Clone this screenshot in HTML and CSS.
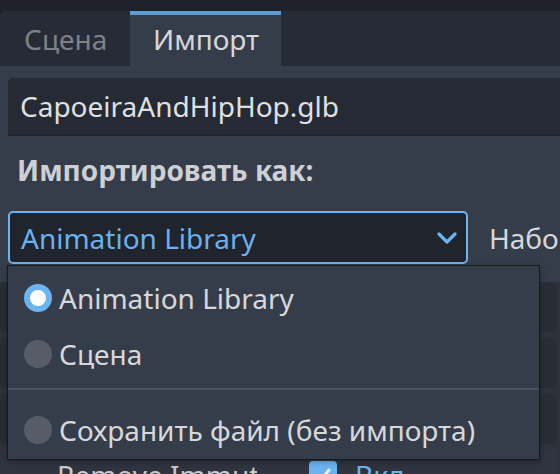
FILE: index.html
```html
<!DOCTYPE html>
<html lang="ru">
<head>
  <meta charset="UTF-8">
  <title>Импорт</title>
  <link rel="stylesheet" href="styles.css">
</head>
<body>

  <!-- вкладки дока -->
  <div class="tabs">
    <div class="tab">Сцена</div>
    <div class="tab active">Импорт</div>
  </div>

  <div class="panel">
    <div class="file-field">CapoeiraAndHipHop.glb</div>
    <div class="section-label">Импортировать как:</div>

    <div class="import-row">
      <div class="select">
        <span>Animation Library</span>
        <svg class="chevron" width="20" height="12" viewBox="0 0 20 12">
          <polyline points="2,2 10,10 18,2" />
        </svg>
      </div>
      <span class="preset">Набор</span>
    </div>

    <!-- инспектор под выпадающим списком -->
    <div class="inspector">
      <div class="prop-row"></div>
      <div class="prop-row"></div>
      <div class="prop-row"></div>
      <div class="prop-row">
        <span class="prop-name">Remove Immutable Tracks</span>
        <span class="check">
          <svg width="28" height="28" viewBox="0 0 28 28">
            <polyline points="8,15 12,19 20,9" />
          </svg>
        </span>
        <span class="check-label">Вкл</span>
      </div>
    </div>

    <!-- открытое меню OptionButton -->
    <div class="popup">
      <div class="popup-item">
        <span class="radio checked"></span>
        <span>Animation Library</span>
      </div>
      <div class="popup-item">
        <span class="radio"></span>
        <span>Сцена</span>
      </div>
      <div class="popup-sep"></div>
      <div class="popup-item">
        <span class="radio"></span>
        <span>Сохранить файл (без импорта)</span>
      </div>
    </div>
  </div>

</body>
</html>
```

FILE: styles.css
```css
/* цвета редактора */
:root {
  --base: #363d4a;
  --dark: #1f222a;
  --tabbar: #262b35;
  --field: #252a34;
  --accent: #6cb3f1;
  --text: #d6d8db;
}
*, *::before, *::after { box-sizing: border-box; margin: 0; padding: 0; }

body {
  width: 560px; height: 474px;
  overflow: hidden;
  background: var(--dark);
  font-family: "Noto Sans", "DejaVu Sans", sans-serif;
  font-size: 28px;
  color: var(--text);
}

/* Tabs */
.tabs {
  margin-top: 11px;
  height: 55px;
  display: flex;
  background: var(--tabbar);
  border-radius: 5px 0 0 0;
  overflow: hidden;
}
.tab {
  width: 130px;
  padding-left: 24px;
  display: flex; align-items: center;
  color: #7e8288;
  white-space: nowrap;
}
.tab.active {
  width: 151px;
  padding-left: 23px;
  background: var(--base);
  color: #d5d7da;
  box-shadow: inset 0 4px 0 #5e9cd4;
}

/* Panel */
.panel {
  position: relative;
  background: var(--base);
  padding-top: 12px;
  height: 408px;
  overflow: hidden;
}
.file-field {
  margin-left: 8px;
  height: 58px;
  padding-left: 12px;
  display: flex; align-items: center;
  background: var(--field);
  border-bottom: 2px solid #1f232b;
  border-radius: 5px 0 0 0;
  color: #dfe0e2;
  white-space: nowrap;
}
.section-label {
  margin: 15px 0 22px 17px;
  line-height: 38px;
  font-weight: 700;
  color: #cdd0d4;
}

.import-row {
  display: flex; align-items: center;
  padding-left: 8px;
  white-space: nowrap;
}
.select {
  flex-shrink: 0;
  width: 460px; height: 53px;
  display: flex; align-items: center; justify-content: space-between;
  padding: 0 9px 0 11px;
  background: #20242c;
  border: 2px solid var(--accent);
  border-radius: 5px;
  color: #6bb1ee;
}
.chevron polyline {
  fill: none;
  stroke: var(--accent);
  stroke-width: 3.2;
  stroke-linecap: round;
  stroke-linejoin: round;
}
.preset {
  margin-left: 21px;
  color: #d5d7da;
}

/* инспектор за попапом */
.inspector {
  margin-top: 18px;
  padding-bottom: 10px;
  background: #2d323c;
  display: flex; flex-direction: column;
  gap: 6px;
}
.prop-row {
  flex-shrink: 0;
  height: 50px;
  margin-right: 3px;
  background: #292d36;
  border-radius: 4px;
  display: flex; align-items: center;
  white-space: nowrap;
}
.prop-row:last-child { background: #2f343e; }
.prop-name {
  width: 257px;
  margin-right: 52px;
  padding-left: 57px;
  overflow: hidden;
  color: #c8cacd;
}
.check {
  width: 28px; height: 28px;
  background: var(--accent);
  border-radius: 4px;
}
.check svg { display: block; }
.check polyline {
  fill: none;
  stroke: #e8f2fb;
  stroke-width: 3;
  stroke-linecap: round;
}
.check-label {
  margin-left: 18px;
  color: var(--accent);
}

/* Popup */
.popup {
  position: absolute;
  left: 7px; top: 199px;
  width: 533px; height: 195px;
  padding-top: 4px;
  background: var(--base);
  border: 1px solid #15181d;
  box-shadow: 0 2px 6px rgba(0,0,0,0.3);
}
.popup-item {
  height: 56px;
  padding-left: 16px;
  display: flex; align-items: center;
  gap: 7px;
  white-space: nowrap;
  color: var(--text);
}
.popup-sep {
  height: 20px;
  padding-top: 6px;
}
.popup-sep::before {
  content: "";
  display: block;
  height: 2px;
  background: #4b5260;
}
.radio {
  width: 28px; height: 28px;
  border-radius: 50%;
  background: #565d69;
  flex-shrink: 0;
}
.radio.checked {
  background: #fff;
  border: 6.5px solid var(--accent);
}
```
